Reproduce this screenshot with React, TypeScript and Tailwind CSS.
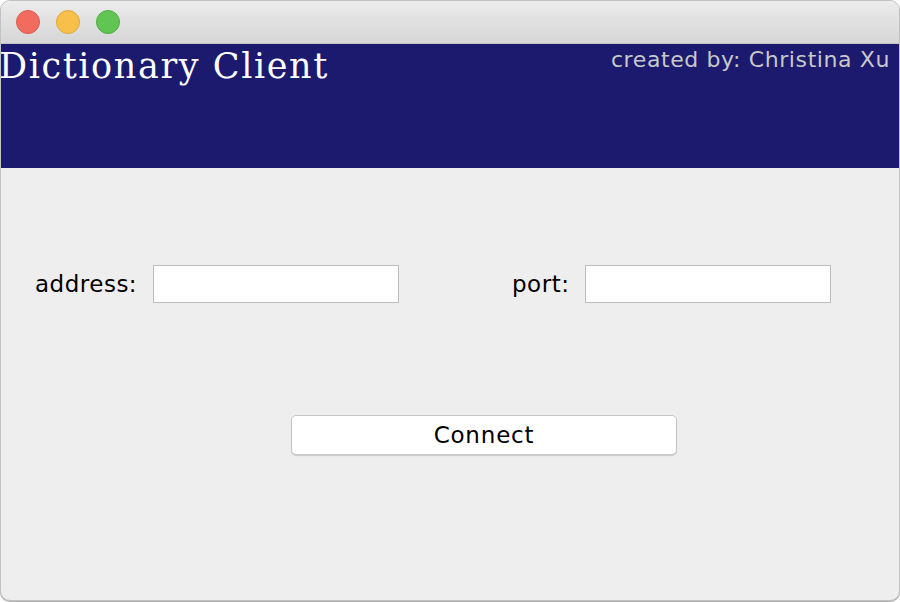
import React from "react";

export default function App() {
  return (
    <div className="w-[900px] h-[602px] bg-white overflow-hidden">
      <div className="w-[900px] h-[601px] rounded-[10px] overflow-hidden border border-[#c2c2c2] bg-[#eeeeee] flex flex-col shadow-[0_1px_1px_rgba(0,0,0,0.35)]">
        <div className="h-[43px] shrink-0 bg-gradient-to-b from-[#ececec] to-[#d6d6d6] border-b border-[#c4c4c4] flex items-center pl-[15px] gap-[16px]">
          <div className="w-[24px] h-[24px] rounded-full bg-[#f16c5f] border border-[#de5a4e]" />
          <div className="w-[24px] h-[24px] rounded-full bg-[#f8c04a] border border-[#dea83a]" />
          <div className="w-[24px] h-[24px] rounded-full bg-[#61c554] border border-[#51ab43]" />
        </div>
        <div className="h-[124px] shrink-0 bg-[#1b1a6f] flex justify-between items-start">
          <div
            className="text-white text-[35px] leading-none mt-[5px] -ml-[2px] tracking-[1.6px]"
            style={{ fontFamily: '"DejaVu Serif", "Liberation Serif", serif' }}
          >
            Dictionary Client
          </div>
          <div
            className="text-[#c8c8c8] text-[22px] leading-none mt-[5px] mr-[9px] tracking-[0.6px]"
            style={{ fontFamily: '"DejaVu Sans", "Liberation Sans", sans-serif' }}
          >
            created by: Christina Xu
          </div>
        </div>
        <div
          className="flex flex-col"
          style={{ fontFamily: '"DejaVu Sans", "Liberation Sans", sans-serif' }}
        >
          <div className="flex items-center mt-[97px] pl-[34px]">
            <span className="text-[23px] text-black w-[118px] tracking-[0.5px]">address:</span>
            <div className="w-[246px] h-[38px] bg-white border border-[#bcbcbc]" />
            <span className="text-[23px] text-black ml-[113px] w-[73px] tracking-[0.5px]">port:</span>
            <div className="w-[246px] h-[38px] bg-white border border-[#bcbcbc]" />
          </div>
          <div className="mt-[112px] ml-[290px] w-[386px] h-[40px] bg-white border border-[#c6c6c6] rounded-[5px] shadow-[0_1px_1px_rgba(0,0,0,0.15)] flex items-center justify-center text-[23px] text-black tracking-[0.8px]">
            Connect
          </div>
        </div>
      </div>
    </div>
  );
}
